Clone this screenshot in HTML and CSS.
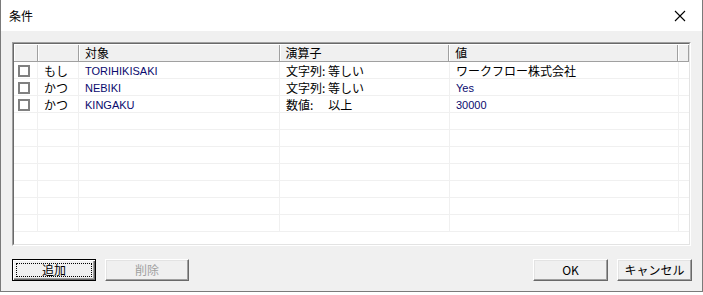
FILE: index.html
```html
<!DOCTYPE html>
<html lang="ja">
<head>
<meta charset="utf-8">
<link rel="stylesheet" href="styles.css">
</head>
<body>
<div class="dialog">
  <div class="titlebar">
    <span class="title">条件</span>
    <svg class="close" width="12" height="12" viewBox="0 0 12 12"><path d="M1 1 L11 11 M11 1 L1 11" stroke="#000" stroke-width="1.1" fill="none"/></svg>
  </div>
  <div class="client">
    <div class="list">
      <div class="inner">
        <div class="row head">
          <div class="c c1"></div>
          <div class="c c2"></div>
          <div class="c c3">対象</div>
          <div class="c c4">演算子</div>
          <div class="c c5">値</div>
          <div class="c c6"></div>
        </div>
        <div class="row">
          <div class="c c1"><span class="cb"></span></div>
          <div class="c c2">もし</div>
          <div class="c c3 lat">TORIHIKISAKI</div>
          <div class="c c4">文字列: 等しい</div>
          <div class="c c5">ワークフロー株式会社</div>
          <div class="c c6"></div>
        </div>
        <div class="row">
          <div class="c c1"><span class="cb"></span></div>
          <div class="c c2">かつ</div>
          <div class="c c3 lat">NEBIKI</div>
          <div class="c c4">文字列: 等しい</div>
          <div class="c c5 lat">Yes</div>
          <div class="c c6"></div>
        </div>
        <div class="row">
          <div class="c c1"><span class="cb"></span></div>
          <div class="c c2">かつ</div>
          <div class="c c3 lat">KINGAKU</div>
          <div class="c c4">数値:<span class="gap">以上</span></div>
          <div class="c c5 lat">30000</div>
          <div class="c c6"></div>
        </div>
        <div class="row"><div class="c c1"></div><div class="c c2"></div><div class="c c3"></div><div class="c c4"></div><div class="c c5"></div><div class="c c6"></div></div>
        <div class="row"><div class="c c1"></div><div class="c c2"></div><div class="c c3"></div><div class="c c4"></div><div class="c c5"></div><div class="c c6"></div></div>
        <div class="row"><div class="c c1"></div><div class="c c2"></div><div class="c c3"></div><div class="c c4"></div><div class="c c5"></div><div class="c c6"></div></div>
        <div class="row"><div class="c c1"></div><div class="c c2"></div><div class="c c3"></div><div class="c c4"></div><div class="c c5"></div><div class="c c6"></div></div>
        <div class="row"><div class="c c1"></div><div class="c c2"></div><div class="c c3"></div><div class="c c4"></div><div class="c c5"></div><div class="c c6"></div></div>
        <div class="row"><div class="c c1"></div><div class="c c2"></div><div class="c c3"></div><div class="c c4"></div><div class="c c5"></div><div class="c c6"></div></div>
        <div class="row"><div class="c c1"></div><div class="c c2"></div><div class="c c3"></div><div class="c c4"></div><div class="c c5"></div><div class="c c6"></div></div>
      </div>
    </div>
    <div class="buttons">
      <button class="btn default w84"><span class="focus">追加</span></button>
      <button class="btn w84 disabled">削除</button>
      <span class="spacer"></span>
      <button class="btn w75">OK</button>
      <button class="btn w75">キャンセル</button>
    </div>
  </div>
</div>
</body>
</html>
```

FILE: styles.css
```css
* { box-sizing: border-box; }
html, body { margin: 0; padding: 0; background: #ffffff; }
body {
  font-family: "Noto Sans CJK JP", "Liberation Sans", sans-serif;
  font-size: 12px;
  color: #000;
}
.dialog {
  width: 703px;
  height: 292px;
  border: 1px solid #7a7a7a;
  border-top: none;
  display: flex;
  flex-direction: column;
  background: #f0f0f0;
}
.titlebar {
  height: 31px;
  background: #ffffff;
  display: flex;
  align-items: center;
  justify-content: space-between;
  padding: 0 16px 0 8px;
}
.title { font-size: 12px; line-height: 14px; }
.close { display: block; }
.client {
  flex: 1;
  padding: 11px 9px 0 11px;
  display: flex;
  flex-direction: column;
}
.list {
  width: 679px;
  height: 204px;
  border-top: 1px solid #a0a0a0;
  border-left: 1px solid #a0a0a0;
  border-right: 1px solid #ffffff;
  border-bottom: 1px solid #ffffff;
}
.inner {
  height: 100%;
  border-top: 1px solid #696969;
  border-left: 1px solid #696969;
  border-right: 1px solid #e3e3e3;
  border-bottom: 1px solid #e3e3e3;
  background: #ffffff;
  overflow: hidden;
}
.row {
  display: flex;
  height: 17px;
  border-bottom: 1px solid #f0f0f0;
}
.c {
  height: 100%;
  border-right: 1px solid #f0f0f0;
  padding-left: 6px;
  padding-top: 2px;
  display: flex;
  align-items: center;
  white-space: nowrap;
  overflow: hidden;
  font-size: 12px;
  line-height: 14px;
}
.c1 { width: 24px; padding-left: 4px; padding-top: 1px; }
.c2 { width: 41px; padding-left: 6px; }
.c3 { width: 201px; }
.c4 { width: 170px; }
.c5 { width: 229px; }
.c6 { flex: 1; border-right: none; }
.gap { margin-left: 15px; }
.lat {
  font-family: "Liberation Sans", sans-serif;
  font-size: 11px;
  color: #0a0a6e;
}
.row.head {
  height: 18px;
  background: #f0f0f0;
  border-bottom: 1px solid #a0a0a0;
  border-top: 1px solid #ffffff;
}
.row.head .c {
  padding-top: 0;
  border-right: 1px solid #a0a0a0;
  box-shadow: inset 1px 0 0 #ffffff;
}
.row.head .c6 { border-right: 1px solid #a0a0a0; flex: none; width: 11px; }
.cb {
  display: block;
  width: 12px;
  height: 12px;
  border: 2px solid #808080;
  background: #ffffff;
}
.buttons {
  display: flex;
  align-items: center;
  margin-top: 13px;
  gap: 9px;
  padding-right: 1px;
}
.spacer { flex: 1; }
.btn {
  height: 22px;
  background: #f0f0f0;
  border-top: 1px solid #ffffff;
  border-left: 1px solid #ffffff;
  border-right: 1px solid #696969;
  border-bottom: 1px solid #696969;
  box-shadow: inset -1px -1px 0 #a0a0a0, inset 1px 1px 0 #e3e3e3;
  font-family: "Noto Sans CJK JP", "Liberation Sans", sans-serif;
  font-size: 12px;
  line-height: 14px;
  color: #000;
  padding: 0;
  display: flex;
  align-items: center;
  justify-content: center;
}
.w84 { width: 84px; }
.w75 { width: 75px; }
.btn.default {
  border: 1px solid #000;
  box-shadow: inset 1px 1px 0 #ffffff, inset -1px -1px 0 #696969, inset -2px -2px 0 #a0a0a0;
  padding: 3px;
}
.focus {
  flex: 1;
  height: 100%;
  border: 1px dotted #000;
  display: flex;
  align-items: center;
  justify-content: center;
}
.btn.disabled { color: #a0a0a0; }
```
